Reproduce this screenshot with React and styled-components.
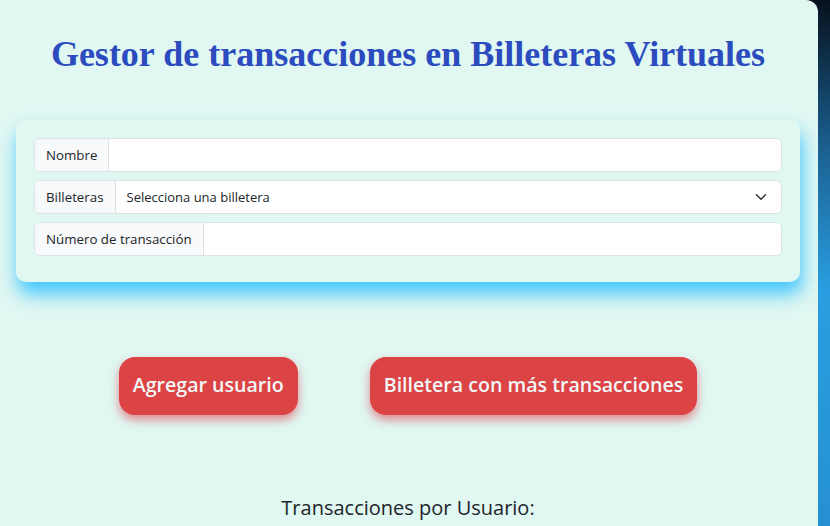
import React from 'react';
import styled, { createGlobalStyle } from 'styled-components';

const GlobalStyle = createGlobalStyle`
  html, body {
    margin: 0;
    height: 100%;
  }
  body {
    background: linear-gradient(180deg, #07111d 0%, #1a5f8f 28%, #2a9ee0 55%, #2590d3 100%);
    font-family: "Open Sans", "Noto Sans", sans-serif;
    overflow: hidden;
  }
`;

const Container = styled.main`
  width: 818px;
  min-height: 526px;
  background: #e0f7f2;
  border-radius: 0 12px 0 0;
  box-sizing: border-box;
  padding: 30px 18px 0 16px;
`;

const Title = styled.h1`
  margin: 0 0 42px;
  text-align: center;
  font-family: "Liberation Serif", "Times New Roman", serif;
  font-weight: bold;
  font-size: 36px;
  line-height: 48px;
  color: #2b4bbf;
`;

const Card = styled.section`
  background: #e0f7f2;
  border-radius: 10px;
  padding: 18px;
  display: flex;
  flex-direction: column;
  gap: 8px;
  box-shadow: 2px 12px 18px rgba(40, 190, 255, 0.85);
`;

const Group = styled.div`
  display: flex;
  height: 34px;
  border: 1px solid #dee2e6;
  border-radius: 6px;
  overflow: hidden;
  background: #fff;
  box-sizing: border-box;
  &:last-child {
    margin-bottom: 8px;
  }
`;

const Addon = styled.label`
  display: flex;
  align-items: center;
  padding: 0 11px;
  background: #f8f9fa;
  border-right: 1px solid #dee2e6;
  font-size: 13.3px;
  color: #212529;
  white-space: nowrap;
`;

const Field = styled.input`
  flex: 1;
  border: none;
  outline: none;
  background: #fff;
`;

const SelectBox = styled.div`
  flex: 1;
  display: flex;
  align-items: center;
  justify-content: space-between;
  padding: 0 14px 0 11px;
  font-size: 13px;
  color: #212529;
`;

const Actions = styled.div`
  display: flex;
  justify-content: center;
  gap: 72px;
  margin-top: 75px;
`;

const Button = styled.button`
  height: 58px;
  padding: 0 14px 4px;
  border: none;
  border-radius: 16px;
  background: #dc4345;
  color: #f2f8f8;
  font-family: "Open Sans", "Noto Sans", sans-serif;
  font-weight: 600;
  font-size: 19.6px;
  box-shadow: 0 5px 10px rgba(220, 53, 69, 0.55);
`;

const Subtitle = styled.h3`
  margin: 79px 0 0;
  text-align: center;
  font-weight: 400;
  font-size: 20px;
  color: #212529;
`;

const Chevron = () => (
  <svg width="12" height="12" viewBox="0 0 16 16" fill="none">
    <path d="M2 5l6 6 6-6" stroke="#343a40" strokeWidth="2" strokeLinecap="round" strokeLinejoin="round" />
  </svg>
);

export default function App() {
  return (
    <>
      <GlobalStyle />
      <Container>
        <Title>Gestor de transacciones en Billeteras Virtuales</Title>
        <Card>
          <Group>
            <Addon>Nombre</Addon>
            <Field type="text" />
          </Group>
          <Group>
            <Addon>Billeteras</Addon>
            <SelectBox>
              Selecciona una billetera
              <Chevron />
            </SelectBox>
          </Group>
          <Group>
            <Addon>Número de transacción</Addon>
            <Field type="text" />
          </Group>
        </Card>
        <Actions>
          <Button>Agregar usuario</Button>
          <Button>Billetera con más transacciones</Button>
        </Actions>
        <Subtitle>Transacciones por Usuario:</Subtitle>
      </Container>
    </>
  );
}
